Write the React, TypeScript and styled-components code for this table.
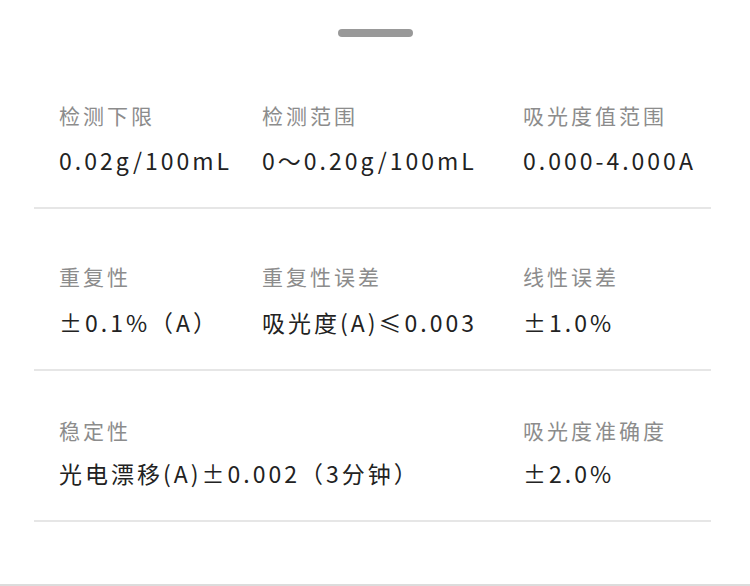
import React from 'react'
import styled, { createGlobalStyle } from 'styled-components'

const GlobalStyle = createGlobalStyle`
    html, body {
        margin: 0;
        padding: 0;
        background: #ffffff;
    }
    body {
        font-family: "Noto Sans CJK SC", "Noto Sans", sans-serif;
    }
`;

const Sheet = styled.div`
    width: 750px;
    height: 586px;
    box-sizing: border-box;
    background: #fff;
    border-bottom: 2px solid #dcdcdc;
    padding: 29px 39px 0 34px;
    display: flex;
    flex-direction: column;
`;

const Handle = styled.div`
    align-self: center;
    width: 75px;
    height: 8px;
    border-radius: 4px;
    background: #999999;
    margin: 0 0 63px 5px;
`;

const Row = styled.div<{ $top: number; $gap: number }>`
    display: grid;
    grid-template-columns: 203px 261px 1fr;
    padding: ${p => p.$top}px 0 32px 25px;
    border-bottom: 2px solid #e6e6e6;
    --gap: ${p => p.$gap}px;
`;

const Cell = styled.div`
    display: flex;
    flex-direction: column;
    gap: var(--gap);
`;

const Label = styled.div`
    font-size: 21px;
    line-height: 30px;
    letter-spacing: 3px;
    color: #8c8c8c;
    white-space: nowrap;
`;

const Value = styled.div`
    font-size: 23px;
    line-height: 30px;
    letter-spacing: 3px;
    color: #222222;
    white-space: nowrap;
`;

interface Spec {
    label: string;
    value: string;
}

const rows: { top: number; gap: number; items: (Spec | null)[] }[] = [
    {
        top: 0,
        gap: 15,
        items: [
            { label: '检测下限', value: '0.02g/100mL' },
            { label: '检测范围', value: '0～0.20g/100mL' },
            { label: '吸光度值范围', value: '0.000-4.000A' },
        ],
    },
    {
        top: 52,
        gap: 16,
        items: [
            { label: '重复性', value: '±0.1%（A）' },
            { label: '重复性误差', value: '吸光度(A)≤0.003' },
            { label: '线性误差', value: '±1.0%' },
        ],
    },
    {
        top: 44,
        gap: 13,
        items: [
            { label: '稳定性', value: '光电漂移(A)±0.002（3分钟）' },
            null,
            { label: '吸光度准确度', value: '±2.0%' },
        ],
    },
];

const App = () => {
    return (
        <>
            <GlobalStyle />
            <Sheet>
                <Handle />
                {rows.map((row, i) => (
                    <Row key={i} $top={row.top} $gap={row.gap}>
                        {row.items.map((item, j) => (
                            <Cell key={j}>
                                {item && (
                                    <>
                                        <Label>{item.label}</Label>
                                        <Value>{item.value}</Value>
                                    </>
                                )}
                            </Cell>
                        ))}
                    </Row>
                ))}
            </Sheet>
        </>
    )
}

export default App;
